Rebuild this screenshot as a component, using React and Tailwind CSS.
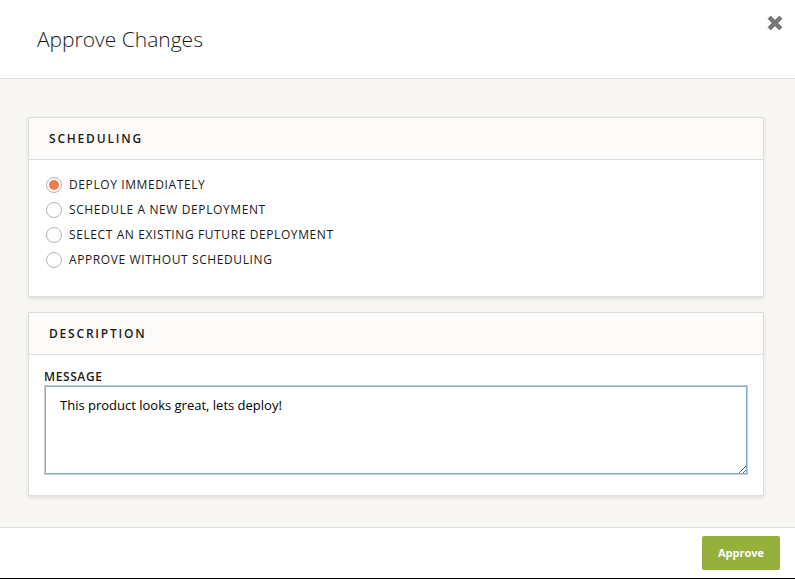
import { useState } from "react";

const OPTIONS = [
  { value: "now", label: "Deploy immediately" },
  { value: "new", label: "Schedule a new deployment" },
  { value: "existing", label: "Select an existing future deployment" },
  { value: "none", label: "Approve without scheduling" },
];

function Panel({ title, children }) {
  return (
    <section className="border border-[#dedede] bg-white shadow-[0_2px_4px_rgba(0,0,0,0.1)]">
      <h2 className="border-b border-[#dedede] bg-[#fcfbf9] px-5 py-3 text-xs leading-[17px] font-semibold tracking-[0.15em] uppercase">
        {title}
      </h2>
      {children}
    </section>
  );
}

function RadioOption({ value, label, checked, onChange }) {
  return (
    <label className="flex h-[25px] items-center gap-[7px] text-xs uppercase tracking-wider">
      <input
        type="radio"
        name="schedule"
        value={value}
        checked={checked}
        onChange={onChange}
        className="size-4 appearance-none rounded-full border border-[#b4b4b4] bg-white bg-clip-content p-[2px] checked:bg-[#ef7d45]"
      />
      {label}
    </label>
  );
}

export default function App() {
  const [schedule, setSchedule] = useState("now");
  const [message, setMessage] = useState("This product looks great, lets deploy!");

  return (
    <div className="flex min-h-screen flex-col border-b border-black bg-white font-['Open_Sans',sans-serif] text-[#1a1a1a]">
      <header className="flex items-start justify-between border-b border-[#dedede] pr-3 pb-6 pl-[37px]">
        <h1 className="pt-6 text-[21px] leading-[30px] font-light">Approve Changes</h1>
        <button type="button" aria-label="Close" className="mt-[15px] text-[#757575]">
          <svg viewBox="0 0 16 16" className="size-4" fill="currentColor">
            <path d="M3.7 1.1 8 5.4l4.3-4.3 2.6 2.6L10.6 8l4.3 4.3-2.6 2.6L8 10.6l-4.3 4.3-2.6-2.6L5.4 8 1.1 3.7Z" stroke="currentColor" strokeWidth="1" strokeLinejoin="round" />
          </svg>
        </button>
      </header>

      <main className="flex grow flex-col gap-[15px] bg-[#f8f7f3] pt-[38px] pr-[31px] pb-[31px] pl-7">
        <Panel title="Scheduling">
          <div role="radiogroup" aria-label="Scheduling" className="px-[17px] pt-3 pb-6">
            {OPTIONS.map((option) => (
              <RadioOption
                key={option.value}
                {...option}
                checked={schedule === option.value}
                onChange={() => setSchedule(option.value)}
              />
            ))}
          </div>
        </Panel>

        <Panel title="Description">
          <div className="px-[15px] pt-[14px] pb-5">
            <label htmlFor="message" className="block text-xs leading-4 font-semibold uppercase tracking-wider">
              Message
            </label>
            <textarea
              id="message"
              value={message}
              onChange={(event) => setMessage(event.target.value)}
              className="block h-[90px] w-full border border-[#cfcac6] bg-white px-[15px] py-[10px] text-[13px] leading-[18px] text-black outline outline-[#7fb0dd] -outline-offset-2"
            />
          </div>
        </Panel>
      </main>

      <footer className="flex justify-end border-t border-[#dedede] pt-2 pr-[15px] pb-2">
        <button type="button" className="h-[34px] rounded-xs bg-[#96b03d] px-4 text-[11px] font-bold text-white">
          Approve
        </button>
      </footer>
    </div>
  );
}
